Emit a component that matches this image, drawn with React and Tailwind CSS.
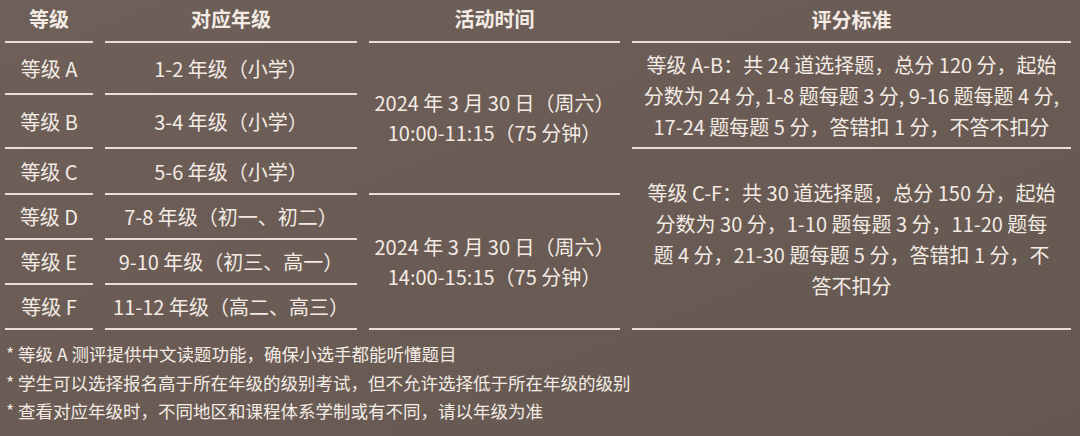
const font = { fontFamily: '"Noto Sans CJK SC", "Noto Sans", sans-serif' };

const levels = [
  { name: "等级 A", grade: "1-2 年级（小学）", h: "h-[52px]" },
  { name: "等级 B", grade: "3-4 年级（小学）", h: "h-[54px]" },
  { name: "等级 C", grade: "5-6 年级（小学）", h: "h-[46px]" },
  { name: "等级 D", grade: "7-8 年级（初一、初二）", h: "h-[45px]" },
  { name: "等级 E", grade: "9-10 年级（初三、高一）", h: "h-[45px]" },
  { name: "等级 F", grade: "11-12 年级（高二、高三）", h: "h-[45px]" },
];

const rules = [
  {
    h: "h-[106px]",
    lines: [
      "等级 A-B：共 24 道选择题，总分 120 分，起始",
      "分数为 24 分, 1-8 题每题 3 分, 9-16 题每题 4 分,",
      "17-24 题每题 5 分，答错扣 1 分，不答不扣分",
    ],
  },
  {
    h: "h-[181px]",
    lines: [
      "等级 C-F：共 30 道选择题，总分 150 分，起始",
      "分数为 30 分，1-10 题每题 3 分，11-20 题每",
      "题 4 分，21-30 题每题 5 分，答错扣 1 分，不",
      "答不扣分",
    ],
  },
];

const notes = [
  "等级 A 测评提供中文读题功能，确保小选手都能听懂题目",
  "学生可以选择报名高于所在年级的级别考试，但不允许选择低于所在年级的级别",
  "查看对应年级时，不同地区和课程体系学制或有不同，请以年级为准",
];

function Head({ children }) {
  return (
    <div className="h-[43px] border-b-2 border-[#e8ded6] flex items-center justify-center pb-[3px] text-[20px] font-bold">
      {children}
    </div>
  );
}

function Cell({ h, children, className = "" }) {
  return (
    <div
      className={`${h} border-b-2 border-[#e8ded6] flex flex-col items-center justify-center text-center ${className}`}
    >
      {children}
    </div>
  );
}

export default function App() {
  return (
    <div
      className="w-[1080px] h-[436px] overflow-hidden bg-gradient-to-br from-[#6e6059] via-[#6a5c55] to-[#645850] text-[#f3ebe4]"
      style={font}
    >
      <div className="flex gap-[12px] pl-[5px] text-[20px]">
        {/* 等级 */}
        <div className="w-[88px] flex flex-col">
          <Head>等级</Head>
          {levels.map((l) => (
            <Cell key={l.name} h={l.h} className="pt-[1px]">
              {l.name}
            </Cell>
          ))}
        </div>

        {/* 对应年级 */}
        <div className="w-[252px] flex flex-col">
          <Head>对应年级</Head>
          {levels.map((l) => (
            <Cell key={l.grade} h={l.h} className="pt-[1px]">
              {l.grade}
            </Cell>
          ))}
        </div>

        {/* 活动时间 */}
        <div className="w-[251px] flex flex-col leading-[30px]">
          <Head>活动时间</Head>
          <Cell h="h-[152px]">
            <div>2024 年 3 月 30 日（周六）</div>
            <div>10:00-11:15（75 分钟）</div>
          </Cell>
          <Cell h="h-[135px]">
            <div>2024 年 3 月 30 日（周六）</div>
            <div>14:00-15:15（75 分钟）</div>
          </Cell>
        </div>

        {/* 评分标准 */}
        <div className="w-[439px] flex flex-col leading-[31px]">
          <Head>评分标准</Head>
          {rules.map((r, i) => (
            <Cell key={i} h={r.h}>
              {r.lines.map((t) => (
                <div key={t} className="whitespace-nowrap">
                  {t}
                </div>
              ))}
            </Cell>
          ))}
        </div>
      </div>

      <div className="pt-[10px] pl-[6px] text-[17.5px] leading-[28.5px]">
        {notes.map((n) => (
          <div key={n} className="whitespace-nowrap">
            * {n}
          </div>
        ))}
      </div>
    </div>
  );
}
